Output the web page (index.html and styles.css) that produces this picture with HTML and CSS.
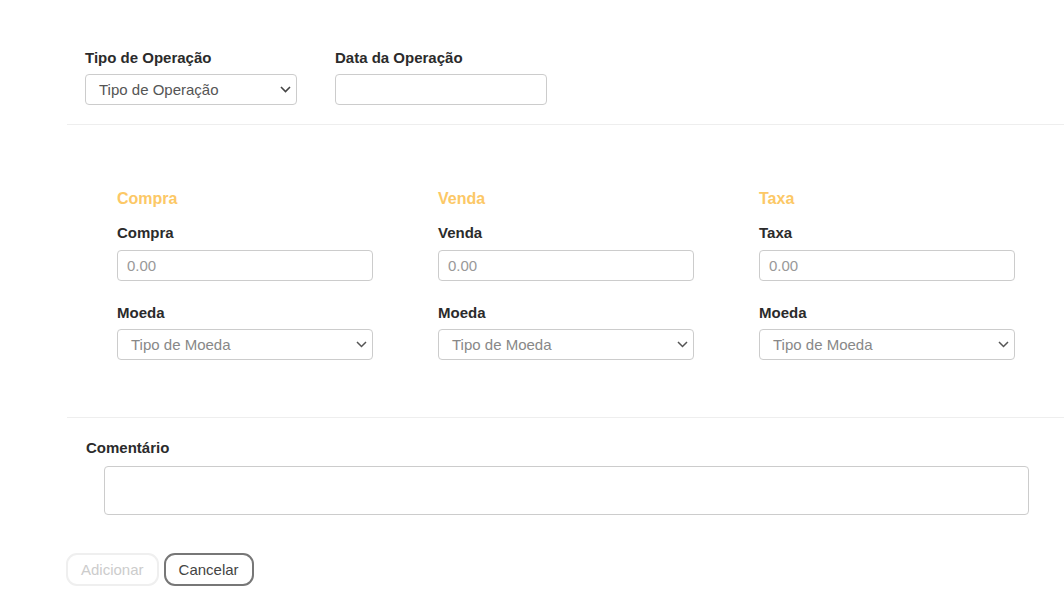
FILE: index.html
```html
<!DOCTYPE html>
<html lang="pt">
<head>
<meta charset="utf-8">
<link rel="stylesheet" href="styles.css">
</head>
<body>
<div class="page">
  <div class="top-row">
    <div class="field">
      <label class="label">Tipo de Operação</label>
      <div class="select-wrap w212">
        <div class="select dark">Tipo de Operação</div>
        <svg class="chev" width="11" height="7" viewBox="0 0 11 7"><path d="M1 1l4.5 4.5L10 1" fill="none" stroke="#444" stroke-width="1.6"/></svg>
      </div>
    </div>
    <div class="field">
      <label class="label">Data da Operação</label>
      <input class="input w212" type="text">
    </div>
  </div>
  <hr class="divider">
  <div class="currency-row">
    <div class="col">
      <div class="col-title">Compra</div>
      <label class="label">Compra</label>
      <input class="input w256" type="text" placeholder="0.00">
      <label class="label mt">Moeda</label>
      <div class="select-wrap w256">
        <div class="select">Tipo de Moeda</div>
        <svg class="chev" width="11" height="7" viewBox="0 0 11 7"><path d="M1 1l4.5 4.5L10 1" fill="none" stroke="#555" stroke-width="1.5"/></svg>
      </div>
    </div>
    <div class="col">
      <div class="col-title">Venda</div>
      <label class="label">Venda</label>
      <input class="input w256" type="text" placeholder="0.00">
      <label class="label mt">Moeda</label>
      <div class="select-wrap w256">
        <div class="select">Tipo de Moeda</div>
        <svg class="chev" width="11" height="7" viewBox="0 0 11 7"><path d="M1 1l4.5 4.5L10 1" fill="none" stroke="#555" stroke-width="1.5"/></svg>
      </div>
    </div>
    <div class="col">
      <div class="col-title">Taxa</div>
      <label class="label">Taxa</label>
      <input class="input w256" type="text" placeholder="0.00">
      <label class="label mt">Moeda</label>
      <div class="select-wrap w256">
        <div class="select">Tipo de Moeda</div>
        <svg class="chev" width="11" height="7" viewBox="0 0 11 7"><path d="M1 1l4.5 4.5L10 1" fill="none" stroke="#555" stroke-width="1.5"/></svg>
      </div>
    </div>
  </div>
  <hr class="divider flush">
  <div class="comment">
    <label class="label">Comentário</label>
    <textarea class="textarea"></textarea>
  </div>
  <div class="actions">
    <button class="btn disabled" disabled>Adicionar</button>
    <button class="btn">Cancelar</button>
  </div>
</div>
</body>
</html>
```

FILE: styles.css
```css
* { box-sizing: border-box; }
html, body { margin: 0; padding: 0; background: #fff; }
body { font-family: "Liberation Sans", Arial, sans-serif; color: #333; }
.page { padding: 49px 0 0 67px; }
.top-row { display: flex; gap: 38px; padding-left: 18px; }
.field { display: flex; flex-direction: column; }
.label { display: block; font-size: 15px; line-height: 18px; font-weight: bold; color: #2b2b2b; margin-bottom: 7px; }
.label.mt { margin-top: 23px; margin-bottom: 7px; }
.w212 { width: 212px; }
.w256 { width: 256px; }
.select-wrap { position: relative; height: 31px; }
.select { height: 31px; border: 1px solid #ccc; border-radius: 4px; padding: 0 13px; font-size: 15px; line-height: 29px; color: #888; background: #fff; }
.select.dark { color: #555; }
.chev { position: absolute; right: 6px; top: 12px; }
.input { display: block; height: 31px; border: 1px solid #ccc; border-radius: 4px; padding: 0 9px; font-family: inherit; font-size: 15px; color: #555; outline: none; margin: 0; }
.input::placeholder { color: #999; }
.divider { border: 0; border-top: 1px solid #eee; margin: 19px 0 0 0; height: 0; }
.divider.flush { margin-top: 0; }
.currency-row { display: flex; gap: 65px; padding: 65px 0 57px 50px; }
.col { display: flex; flex-direction: column; }
.col-title { font-size: 16px; line-height: 18px; font-weight: bold; color: #fcc866; margin-bottom: 16px; }
.col .label + .input { margin-top: 1px; }
.comment { padding: 21px 0 0 19px; }
.textarea { display: block; margin: 9px 0 0 18px; width: 925px; height: 49px; border: 1px solid #ccc; border-radius: 4px; resize: none; font-family: inherit; outline: none; }
.actions { display: flex; gap: 5px; margin-top: 38px; margin-left: -1px; }
.btn { height: 33px; padding: 0 13px; border-radius: 11px; font-family: inherit; font-size: 15px; background: #fff; border: 2px solid #777; color: #444; }
.btn.disabled { border-color: #efefef; color: #ccc; }
```
